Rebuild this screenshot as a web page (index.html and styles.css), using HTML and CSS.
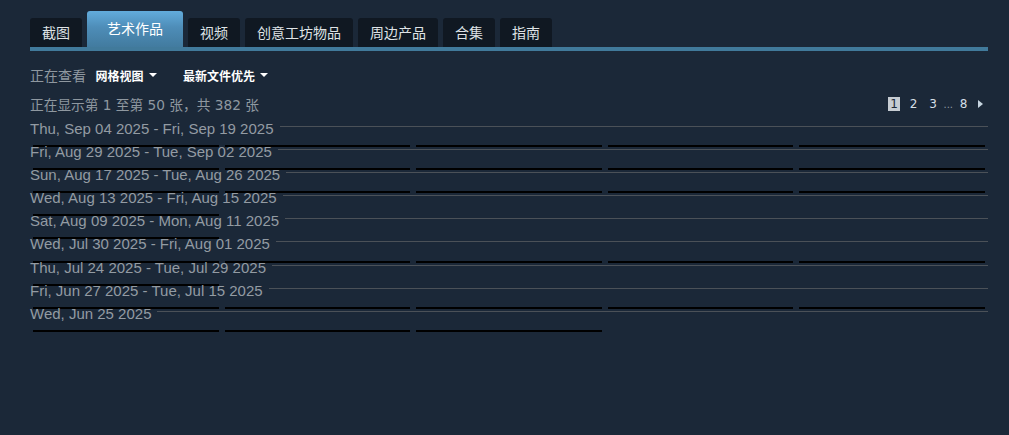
FILE: index.html
```html
<!DOCTYPE html>
<html lang="zh">
<head>
<meta charset="utf-8">
<title>艺术作品</title>
<link rel="stylesheet" href="styles.css">
</head>
<body>
<div class="page">
  <nav class="tabs">
    <a class="tab">截图</a>
    <a class="tab active">艺术作品</a>
    <a class="tab">视频</a>
    <a class="tab">创意工坊物品</a>
    <a class="tab">周边产品</a>
    <a class="tab">合集</a>
    <a class="tab">指南</a>
  </nav>
  <div class="tabline"></div>

  <div class="viewbar">
    <span class="label">正在查看</span>
    <span class="dropdown first">网格视图<i class="caret"></i></span>
    <span class="dropdown second">最新文件优先<i class="caret"></i></span>
  </div>

  <div class="pagingbar">
    <span class="count">正在显示第 1 至第 50 张，共 382 张</span>
    <div class="pager">
      <span class="pg current">1</span>
      <span class="pg">2</span>
      <span class="pg">3</span>
      <span class="ellipsis">...</span>
      <span class="pg last">8</span>
      <span class="next"></span>
    </div>
  </div>

  <div class="groups">
    <section class="group">
      <div class="ghead"><span class="date">Thu, Sep 04 2025 - Fri, Sep 19 2025</span><span class="rule"></span></div>
      <div class="items"><div class="item"></div><div class="item"></div><div class="item"></div><div class="item"></div><div class="item"></div></div>
    </section>
    <section class="group">
      <div class="ghead"><span class="date">Fri, Aug 29 2025 - Tue, Sep 02 2025</span><span class="rule"></span></div>
      <div class="items"><div class="item"></div><div class="item"></div><div class="item"></div><div class="item"></div><div class="item"></div></div>
    </section>
    <section class="group">
      <div class="ghead"><span class="date">Sun, Aug 17 2025 - Tue, Aug 26 2025</span><span class="rule"></span></div>
      <div class="items"><div class="item"></div><div class="item"></div><div class="item"></div><div class="item"></div><div class="item"></div></div>
    </section>
    <section class="group">
      <div class="ghead"><span class="date">Wed, Aug 13 2025 - Fri, Aug 15 2025</span><span class="rule"></span></div>
      <div class="items"><div class="item"></div></div>
    </section>
    <section class="group">
      <div class="ghead"><span class="date">Sat, Aug 09 2025 - Mon, Aug 11 2025</span><span class="rule"></span></div>
      <div class="items"><div class="item"></div></div>
    </section>
    <section class="group">
      <div class="ghead"><span class="date">Wed, Jul 30 2025 - Fri, Aug 01 2025</span><span class="rule"></span></div>
      <div class="items"><div class="item"></div><div class="item"></div><div class="item"></div><div class="item"></div><div class="item"></div></div>
    </section>
    <section class="group">
      <div class="ghead"><span class="date">Thu, Jul 24 2025 - Tue, Jul 29 2025</span><span class="rule"></span></div>
      <div class="items"><div class="item"></div></div>
    </section>
    <section class="group">
      <div class="ghead"><span class="date">Fri, Jun 27 2025 - Tue, Jul 15 2025</span><span class="rule"></span></div>
      <div class="items"><div class="item"></div><div class="item"></div><div class="item"></div><div class="item"></div><div class="item"></div></div>
    </section>
    <section class="group">
      <div class="ghead"><span class="date">Wed, Jun 25 2025</span><span class="rule"></span></div>
      <div class="items"><div class="item"></div><div class="item"></div><div class="item"></div></div>
    </section>
  </div>
</div>
</body>
</html>
```

FILE: styles.css
```css
html, body {
  margin: 0;
  padding: 0;
  background: #1b2838;
}

body {
  font-family: "Liberation Sans", Arial, "Noto Sans CJK SC", sans-serif;
  color: #8f98a0;
}

.page {
  width: 958px;
  padding-left: 30px;
}

/* Tabs */
.tabs {
  display: flex;
  align-items: flex-end;
  gap: 5px;
  padding-top: 11px;
  height: 36px;
}

.tab {
  display: block;
  height: 29px;
  line-height: 29px;
  padding: 0 12px;
  background: #101822;
  color: #dfe3e6;
  font-family: "Noto Sans CJK SC", sans-serif;
  font-size: 14px;
  border-radius: 3px 3px 0 0;
  cursor: pointer;
}

.tab.active {
  height: 36px;
  line-height: 35px;
  padding: 0 20px;
  color: #ffffff;
  background: linear-gradient(to bottom, #62acdc 0%, #4e8db8 45%, #427b9f 100%);
}

.tabline {
  height: 4px;
  background: #417a9b;
}

/* View bar */
.viewbar {
  display: flex;
  align-items: center;
  height: 14px;
  margin-top: 17px;
}

.label {
  font-family: "Noto Sans CJK SC", sans-serif;
  font-size: 14px;
  color: #8f98a0;
}

.dropdown {
  display: flex;
  align-items: center;
  font-family: "Noto Sans CJK SC", sans-serif;
  font-size: 12px;
  font-weight: bold;
  color: #ffffff;
  cursor: pointer;
}

.dropdown.first {
  margin-left: 9.5px;
}

.dropdown.second {
  margin-left: 26.5px;
}

.caret {
  display: block;
  width: 0;
  height: 0;
  margin-left: 5px;
  border-left: 4px solid transparent;
  border-right: 4px solid transparent;
  border-top: 4px solid #ffffff;
}

/* Paging bar */
.pagingbar {
  display: flex;
  align-items: center;
  justify-content: space-between;
  height: 14px;
  margin-top: 15px;
}

.count {
  font-family: "DejaVu Sans", "Noto Sans CJK SC", sans-serif;
  font-size: 13.7px;
  color: #8f98a0;
}

.pager {
  display: flex;
  align-items: center;
  padding-right: 5px;
  font-family: "DejaVu Sans", sans-serif;
  font-size: 12px;
}

.pg {
  display: block;
  width: 12px;
  height: 14px;
  line-height: 14px;
  text-align: center;
  color: #d6dfe6;
  margin-left: 7.5px;
}

.pg.current {
  margin-left: 0;
  background: #c6ccd2;
  color: #1b2838;
}

.pg.last {
  margin-left: 4.5px;
}

.ellipsis {
  display: block;
  width: 9.5px;
  margin-left: 4.5px;
  font-size: 10px;
  color: #8f98a0;
  line-height: 14px;
  padding-top: 2px;
  overflow: hidden;
}

.next {
  display: block;
  width: 0;
  height: 0;
  margin-left: 8.5px;
  border-top: 4px solid transparent;
  border-bottom: 4px solid transparent;
  border-left: 5px solid #c6d4df;
}

/* Groups */
.groups {
  margin-top: 12.9px;
}

.group {
  display: block;
}

.ghead {
  display: flex;
  align-items: flex-start;
  height: 9.85px;
  line-height: 9.85px;
}

.date {
  font-size: 15px;
  color: #939ba3;
  white-space: nowrap;
}

.rule {
  flex: 1;
  height: 1px;
  margin-top: 2px;
  margin-left: 6px;
  background: #4b5158;
}

.items {
  display: flex;
  margin-top: 11.275px;
}

.item {
  width: calc(20% - 6px);
  height: 2px;
  margin: 0 3px;
  background: #000000;
}
```
